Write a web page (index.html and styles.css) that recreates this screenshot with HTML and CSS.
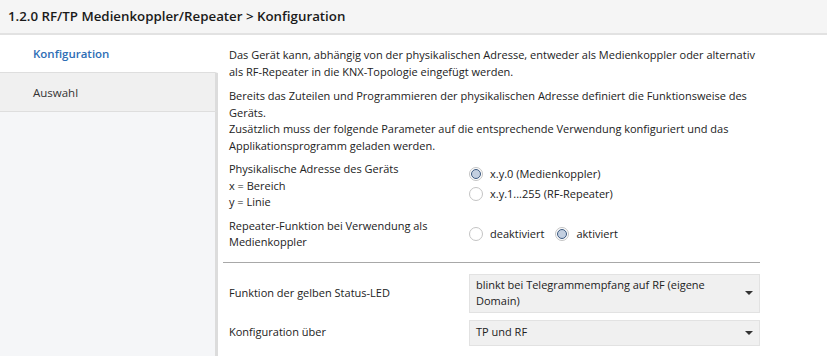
FILE: index.html
```html
<!DOCTYPE html>
<html lang="de">
<head>
    <meta charset="UTF-8">
    <title>Konfiguration</title>
    <link rel="stylesheet" href="styles.css">
</head>
<body>

    <div class="header">1.2.0 RF/TP Medienkoppler/Repeater &gt; Konfiguration</div>

    <div class="main">
        <div class="sidebar">
            <a href="#" class="nav-item active">Konfiguration</a>
            <a href="#" class="nav-item">Auswahl</a>
            <div class="nav-fill"></div>
        </div>

        <div class="content">
            <p class="text">Das Gerät kann, abhängig von der physikalischen Adresse, entweder als Medienkoppler oder alternativ als RF-Repeater in die KNX-Topologie eingefügt werden.</p>
            <p class="text">Bereits das Zuteilen und Programmieren der physikalischen Adresse definiert die Funktionsweise des Geräts.<br>Zusätzlich muss der folgende Parameter auf die entsprechende Verwendung konfiguriert und das Applikationsprogramm geladen werden.</p>

            <div class="param">
                <div class="label">Physikalische Adresse des Geräts<br>x = Bereich<br>y = Linie</div>
                <div class="value radios vertical">
                    <label class="radio"><span class="dot checked"></span>x.y.0 (Medienkoppler)</label>
                    <label class="radio"><span class="dot"></span>x.y.1...255 (RF-Repeater)</label>
                </div>
            </div>

            <div class="param">
                <div class="label">Repeater-Funktion bei Verwendung als Medienkoppler</div>
                <div class="value radios">
                    <label class="radio"><span class="dot"></span>deaktiviert</label>
                    <label class="radio"><span class="dot checked"></span>aktiviert</label>
                </div>
            </div>

            <hr class="sep">

            <div class="param select-row">
                <div class="label">Funktion der gelben Status-LED</div>
                <div class="select">
                    <span class="select-text">blinkt bei Telegrammempfang auf RF (eigene Domain)</span>
                    <span class="arrow"></span>
                </div>
            </div>

            <div class="param select-row">
                <div class="label">Konfiguration über</div>
                <div class="select">
                    <span class="select-text">TP und RF</span>
                    <span class="arrow"></span>
                </div>
            </div>
        </div>
    </div>

</body>
</html>
```

FILE: styles.css
```css
body {
    font-family: "Open Sans", Arial, sans-serif;
    font-size: 11px;
    color: #222;
    margin: 0;
    padding: 0;
    height: 356px;
    overflow: hidden;
}

.header {
    height: 33px;
    line-height: 32px;
    padding-left: 8px;
    background-color: #f5f5f5;
    border-bottom: 2px solid #e2e2e2;
    font-size: 13.3px;
    font-weight: 600;
    color: #1a1a1a;
}

.main {
    display: flex;
    height: 321px;
}

.sidebar {
    width: 218px;
    display: flex;
    flex-direction: column;
}

.nav-item {
    display: block;
    height: 37px;
    line-height: 37px;
    padding-left: 33px;
    text-decoration: none;
    font-size: 11.5px;
    color: #333;
    background-color: #f0f0f0;
    border-bottom: 1px solid #dedede;
    border-right: 3px solid #dcdcdc;
}

.nav-item.active {
    color: #2d6db5;
    font-weight: 600;
    background-color: #fff;
    border-right-color: #fff;
}

.nav-item + .nav-item {
    height: 38px;
    line-height: 40px;
}

.nav-fill {
    flex: 1;
    background-color: #f5f6f8;
    border-right: 3px solid #dcdcdc;
}

.content {
    flex: 1;
    padding: 12px 0 0 11px;
    line-height: 16.5px;
}

.text {
    width: 534px;
    margin: 0 0 8px 0;
}

.text + .param {
    margin-top: -1px;
}

.param {
    display: flex;
    width: 531px;
    margin-bottom: 7px;
}

.label {
    width: 240px;
}

.radios {
    display: flex;
    align-items: center;
    gap: 11px;
}

.radios.vertical {
    flex-direction: column;
    align-items: flex-start;
    justify-content: flex-start;
    padding-top: 5px;
    gap: 3px;
}

.radio {
    display: flex;
    align-items: center;
    color: #1a1a1a;
}

.dot {
    width: 14px;
    height: 14px;
    border: 1px solid #c4c4c4;
    border-radius: 50%;
    background-color: #fff;
    margin-right: 7px;
    box-sizing: border-box;
    position: relative;
}

.dot.checked::after {
    content: "";
    position: absolute;
    left: 1px;
    top: 1px;
    width: 10px;
    height: 10px;
    border: 1px solid #3d5a80;
    border-radius: 50%;
    background-color: #c3cfe0;
    box-sizing: border-box;
}

.sep {
    width: 537px;
    margin: 11px 0 11px -6px;
    border: none;
    border-top: 1px solid #a8a8a8;
}

.select-row {
    align-items: center;
}

.select {
    flex: 1;
    display: flex;
    align-items: center;
    background-color: #f0f0f0;
    border: 1px solid #e2e2e2;
    padding: 2px 0 2px 6px;
    min-height: 20px;
}

.select-text {
    flex: 1;
    padding-right: 20px;
}

.arrow {
    width: 0;
    height: 0;
    border-left: 4px solid transparent;
    border-right: 4px solid transparent;
    border-top: 4px solid #333;
    margin-right: 6px;
}
```
